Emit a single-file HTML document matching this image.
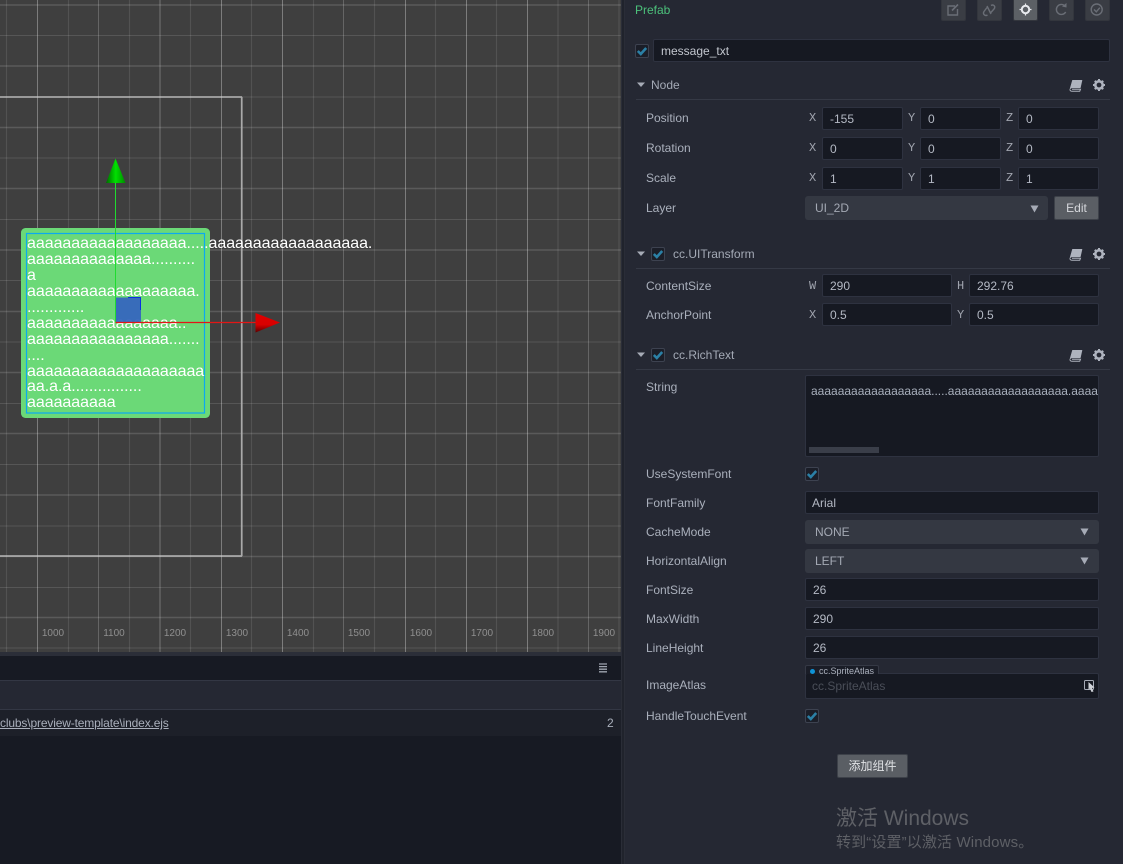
<!DOCTYPE html>
<html><head><meta charset="utf-8"><title>Inspector</title>
<style>
html,body{margin:0;padding:0;background:#252833}
body{width:1123px;height:864px;overflow:hidden;position:relative;font-family:"Liberation Sans","Noto Sans CJK SC",sans-serif;font-size:12px;color:#aab0bc}
div,span,svg{position:absolute;box-sizing:border-box}
.l{left:646px;line-height:14px;white-space:nowrap;color:#aab0bc}
.i{background:#161922;border:1px solid #2e3240;border-radius:2px;height:23px;line-height:22px;padding-left:7px;color:#b4b9c4;white-space:nowrap;overflow:hidden}
.s{background:#343842;border-radius:3px;height:24px;line-height:24px;padding-left:10px;left:805px;color:#a4a9b4}
.a{font-family:"Liberation Mono",monospace;font-size:12px;color:#a0a4ae;line-height:14px}
.c{width:14px;height:14px;background:#1b1e28;border:1px solid #3d4250;border-radius:2px}
.h{left:636px;width:474px;height:1px;background:#353945}
.t{line-height:14px;color:#a4aab6;white-space:nowrap}
.rl{font-size:10px;color:#8f8f8f;line-height:12px;top:628px;width:30px;text-align:center}
.m{left:27px;font-size:16px;line-height:16px;color:#fff;white-space:pre;letter-spacing:-.04px}
.b{top:0;width:25px;height:21px;background:#3a3d44;border-radius:0 0 2px 2px;border:1px solid #33363d;border-top:0}
</style></head><body>
<svg width="0" height="0" style="left:0;top:0">
<defs>
<symbol id="ck" viewBox="0 0 14 14"><path d="M2.800 7L5.800 10L11.200 4" fill="none" stroke="#2b80a6" stroke-width="2.600"/></symbol>
<symbol id="bk" viewBox="0 0 14 12"><path d="M3.500 .3H13L11.300 7.800H3C2 7.800 1.300 8.300 1 9.300L.8 9.800Z" fill="#aeb3be" stroke="#aeb3be" stroke-width=".6" stroke-linejoin="round"/><path d="M1 9.800C1.200 10.900 1.900 11.300 3 11.300H10.700L11.500 9.300H3" fill="none" stroke="#aeb3be" stroke-width="1"/></symbol>
<symbol id="gr" viewBox="0 0 12 12"><circle cx="6" cy="6" r="3.700" fill="none" stroke="#aeb3be" stroke-width="2.600"/><path d="M6 0V2.500M6 9.500V12M0 6H2.500M9.500 6H12M1.800 1.800L3.500 3.500M8.500 8.500L10.200 10.200M1.800 10.200L3.500 8.500M8.500 3.500L10.200 1.800" stroke="#aeb3be" stroke-width="2"/></symbol>
<symbol id="tr" viewBox="0 0 10 6"><path d="M1 .5H9L5 5Z" fill="#a6abb6"/></symbol>
<symbol id="dd" viewBox="0 0 9 8"><path d="M.5 .5H8.500L4.500 7.500Z" fill="#a6abb6"/></symbol>
</defs></svg>

<!-- scene -->
<div style="left:0;top:0;width:621px;height:652px;background:#3f3f3f;overflow:hidden">
<svg width="621" height="652" style="left:0;top:0">
<g stroke="#fff" stroke-opacity=".1" stroke-width="1.200">
<path d="M6.500 0V652M68.500 0V652M129.500 0V652M190.500 0V652M251.500 0V652M313.500 0V652M374.500 0V652M435.500 0V652M496.500 0V652M558 0V652M619 0V652"/>
</g>
<g stroke="#fff">
<path d="M0 5H621M0 66H621M0 127.500H621M0 188.500H621M0 250H621M0 311.500H621M0 372.500H621M0 433.500H621M0 495H621M0 556.500H621M0 617.500H621" stroke-opacity=".14" stroke-width="1.500"/>
<path d="M0 35.500H621M0 97H621M0 158H621M0 219.500H621M0 280.500H621M0 342H621M0 403.500H621M0 464.500H621M0 526H621M0 587.500H621M0 648H621" stroke-opacity=".12" stroke-width="1"/>
</g>
<g stroke="#fff" stroke-width="1">
<path d="M37.500 0V652M221.500 0V652M282.500 0V652M405.500 0V652M466.500 0V652M527.500 0V652" stroke-opacity=".32"/>
<path d="M98.500 0V652M343.500 0V652M588.500 0V652" stroke-opacity=".2"/>
<path d="M160 0V652" stroke-opacity=".18" stroke-width="1.600"/>
</g>
<path d="M0 97H241.500V556H0" fill="none" stroke="#cfcfcf" stroke-width="1.200"/>
<path d="M241.800 97V556" stroke="#aaa" stroke-width="1.600"/>
<rect x="21" y="228" width="189" height="190" rx="4.500" fill="#6bd977"/>
<rect x="26.500" y="233.500" width="178" height="179.500" fill="none" stroke="#0ba9f0" stroke-width="1.200"/>
</svg>
<div class="m" style="top:236px">aaaaaaaaaaaaaaaaaa.....aaaaaaaaaaaaaaaaaa.</div>
<div class="m" style="top:252px">aaaaaaaaaaaaaa..........</div>
<div class="m" style="top:268px">a</div>
<div class="m" style="top:284px">aaaaaaaaaaaaaaaaaaa.</div>
<div class="m" style="top:300px">.............</div>
<div class="m" style="top:316px">aaaaaaaaaaaaaaaaa..</div>
<div class="m" style="top:332px">aaaaaaaaaaaaaaaa.......</div>
<div class="m" style="top:348px">....</div>
<div class="m" style="top:364px">aaaaaaaaaaaaaaaaaaaa</div>
<div class="m" style="top:379px">aa.a.a................</div>
<div class="m" style="top:395px">aaaaaaaaaa</div>
<svg width="621" height="652" style="left:0;top:0">
<defs>
<linearGradient id="gg" x1="0" x2="1" y1="0" y2="0"><stop offset="0" stop-color="#006a00"/><stop offset=".5" stop-color="#00e000"/><stop offset="1" stop-color="#008a00"/></linearGradient>
<linearGradient id="rg" x1="0" x2="0" y1="0" y2="1"><stop offset="0" stop-color="#e00000"/><stop offset=".6" stop-color="#d80000"/><stop offset="1" stop-color="#5a0000"/></linearGradient>
</defs>
<rect x="116" y="297.500" width="25" height="25" fill="#3563bf" fill-opacity=".93"/>
<path d="M128 297.500H140.500V310" fill="none" stroke="#0a2fe0" stroke-width="1"/>
<path d="M115.500 182V322" stroke="#1fdc2f" stroke-width="1"/>
<path d="M115.500 322.500H256" stroke="#e21616" stroke-width="1.200"/>
<path d="M115.500 158.500L125.500 183H106Z" fill="url(#gg)"/>
<path d="M280 322.500L255.500 313V332.500Z" fill="url(#rg)"/>
</svg>
<div class="rl" style="left:38px">1000</div><div class="rl" style="left:99px">1100</div><div class="rl" style="left:160px">1200</div><div class="rl" style="left:222px">1300</div><div class="rl" style="left:283px">1400</div><div class="rl" style="left:344px">1500</div><div class="rl" style="left:406px">1600</div><div class="rl" style="left:467px">1700</div><div class="rl" style="left:528px">1800</div><div class="rl" style="left:589px">1900</div>
</div>

<!-- console -->
<div style="left:0;top:652px;width:621px;height:4px;background:#2b2e38"></div>
<div style="left:0;top:656px;width:621px;height:25px;background:#171a23;border-bottom:1px solid #333744"></div>
<div style="left:0;top:681px;width:621px;height:29px;background:#252833;border-bottom:1px solid #333744"></div>
<div style="left:0;top:710px;width:621px;height:26px;background:#1d2029"></div>
<div style="left:0;top:736px;width:621px;height:128px;background:#171a23"></div>
<svg width="9" height="10" style="left:599px;top:663px"><path d="M0 1H8M0 3.600H8M0 6.200H8M0 8.800H8" stroke="#a0a5b0" stroke-width="1.300"/></svg>
<div class="t" style="left:0;top:716px;width:180px;text-decoration:underline;color:#a9afbb;letter-spacing:-.15px">clubs\preview-template\index.ejs</div>
<div class="t" style="left:607px;top:716px;color:#a9afbb">2</div>

<!-- divider -->
<div style="left:621px;top:0;width:4px;height:864px;background:#20232c;border-left:1px solid #2a2d37;border-right:1px solid #2a2d37"></div>

<!-- inspector top -->
<div class="t" style="left:635px;top:3px;color:#4cc17b">Prefab</div>
<div class="b" style="left:941px"></div><div class="b" style="left:977px"></div><div class="b" style="left:1013px;background:#5c6065"></div><div class="b" style="left:1049px"></div><div class="b" style="left:1085px"></div>
<svg width="170" height="21" style="left:941px;top:0" fill="none" stroke="#6a6e76" stroke-width="1.400">
<path d="M14 6H7V15H16.500V9"/><path d="M11 10.500L17 4.500" stroke-width="1.600"/>
<path d="M46 7.500L43 11.500C41.500 14 44 16.500 46.500 15M49 13.500L53 9C55 6.500 52.500 4 50 5.500M46 6L50 14"/>
<g stroke="#e8eaee"><circle cx="84.500" cy="9.500" r="3.700" stroke-width="2"/><path d="M84.500 3.500V5.500M84.500 13.500V15.500M78.500 9.500H80.500M88.500 9.500H90.500" stroke-width="1.200"/></g>
<path d="M124 6A5 5 0 1 0 124.700 12"/><path d="M121 6.500L125.500 7.500L125.500 3Z" fill="#6a6e76" stroke="none"/>
<circle cx="155.700" cy="9.500" r="5.500"/><path d="M153 9.500L155.300 11.800L158.800 7.700"/>
</svg>
<div class="c" style="left:635px;top:44px"></div><svg width="14" height="14" style="left:635px;top:44px"><use href="#ck"/></svg>
<div class="i" style="left:653px;top:39px;width:457px;color:#c2c6ce">message_txt</div>

<!-- Node -->
<svg width="10" height="6" style="left:636px;top:82px"><use href="#tr"/></svg>
<div class="t" style="left:651px;top:78px">Node</div>
<svg width="14" height="12" style="left:1069px;top:80px"><use href="#bk"/></svg>
<svg width="12" height="12" style="left:1093px;top:79px"><use href="#gr"/></svg>
<div class="h" style="top:99px"></div>

<div class="l" style="top:111px">Position</div>
<span class="a" style="left:809px;top:111px">X</span><div class="i" style="left:822px;top:107px;width:81px">-155</div>
<span class="a" style="left:908px;top:111px">Y</span><div class="i" style="left:920px;top:107px;width:81px">0</div>
<span class="a" style="left:1006px;top:111px">Z</span><div class="i" style="left:1018px;top:107px;width:81px">0</div>

<div class="l" style="top:141px">Rotation</div>
<span class="a" style="left:809px;top:141px">X</span><div class="i" style="left:822px;top:137px;width:81px">0</div>
<span class="a" style="left:908px;top:141px">Y</span><div class="i" style="left:920px;top:137px;width:81px">0</div>
<span class="a" style="left:1006px;top:141px">Z</span><div class="i" style="left:1018px;top:137px;width:81px">0</div>

<div class="l" style="top:171px">Scale</div>
<span class="a" style="left:809px;top:171px">X</span><div class="i" style="left:822px;top:167px;width:81px">1</div>
<span class="a" style="left:908px;top:171px">Y</span><div class="i" style="left:920px;top:167px;width:81px">1</div>
<span class="a" style="left:1006px;top:171px">Z</span><div class="i" style="left:1018px;top:167px;width:81px">1</div>

<div class="l" style="top:201px">Layer</div>
<div class="s" style="top:196px;width:243px">UI_2D</div>
<svg width="9" height="8" style="left:1030px;top:205px"><use href="#dd"/></svg>
<div style="left:1054px;top:196px;width:45px;height:24px;background:#5a5e64;border:1px solid #3d4149;border-radius:2px;text-align:center;line-height:22px;color:#d5d7db">Edit</div>

<!-- UITransform -->
<svg width="10" height="6" style="left:636px;top:251px"><use href="#tr"/></svg>
<div class="c" style="left:651px;top:247px"></div><svg width="14" height="14" style="left:651px;top:247px"><use href="#ck"/></svg>
<div class="t" style="left:673px;top:247px">cc.UITransform</div>
<svg width="14" height="12" style="left:1069px;top:249px"><use href="#bk"/></svg>
<svg width="12" height="12" style="left:1093px;top:248px"><use href="#gr"/></svg>
<div class="h" style="top:268px"></div>

<div class="l" style="top:279px">ContentSize</div>
<span class="a" style="left:809px;top:279px">W</span><div class="i" style="left:822px;top:274px;width:130px">290</div>
<span class="a" style="left:957px;top:279px">H</span><div class="i" style="left:969px;top:274px;width:130px">292.76</div>
<div class="l" style="top:308px">AnchorPoint</div>
<span class="a" style="left:809px;top:308px">X</span><div class="i" style="left:822px;top:303px;width:130px">0.5</div>
<span class="a" style="left:957px;top:308px">Y</span><div class="i" style="left:969px;top:303px;width:130px">0.5</div>

<!-- RichText -->
<svg width="10" height="6" style="left:636px;top:352px"><use href="#tr"/></svg>
<div class="c" style="left:651px;top:348px"></div><svg width="14" height="14" style="left:651px;top:348px"><use href="#ck"/></svg>
<div class="t" style="left:673px;top:348px">cc.RichText</div>
<svg width="14" height="12" style="left:1069px;top:350px"><use href="#bk"/></svg>
<svg width="12" height="12" style="left:1093px;top:349px"><use href="#gr"/></svg>
<div class="h" style="top:369px"></div>

<div class="l" style="top:380px">String</div>
<div class="i" style="left:805px;top:375px;width:294px;height:82px;padding-left:5px;line-height:30px;color:#a9b0bd">aaaaaaaaaaaaaaaaaa.....aaaaaaaaaaaaaaaaaa.aaaaaaaaaaaaaa</div>
<div style="left:809px;top:447px;width:70px;height:6px;background:#3a3e49"></div>

<div class="l" style="top:467px">UseSystemFont</div>
<div class="c" style="left:805px;top:467px"></div><svg width="14" height="14" style="left:805px;top:467px"><use href="#ck"/></svg>

<div class="l" style="top:496px">FontFamily</div>
<div class="i" style="left:805px;top:491px;width:294px;padding-left:6px">Arial</div>
<div class="l" style="top:525px">CacheMode</div>
<div class="s" style="top:520px;width:294px">NONE</div>
<svg width="9" height="8" style="left:1080px;top:528px"><use href="#dd"/></svg>
<div class="l" style="top:554px">HorizontalAlign</div>
<div class="s" style="top:549px;width:294px">LEFT</div>
<svg width="9" height="8" style="left:1080px;top:557px"><use href="#dd"/></svg>
<div class="l" style="top:583px">FontSize</div>
<div class="i" style="left:805px;top:578px;width:294px">26</div>
<div class="l" style="top:612px">MaxWidth</div>
<div class="i" style="left:805px;top:607px;width:294px">290</div>
<div class="l" style="top:641px">LineHeight</div>
<div class="i" style="left:805px;top:636px;width:294px">26</div>
<div class="l" style="top:678px">ImageAtlas</div>
<div class="i" style="left:805px;top:673px;width:294px;height:26px;line-height:24px;padding-left:6px;color:#4a4e58">cc.SpriteAtlas</div>
<div style="left:805px;top:665px;width:74px;height:9px;background:#1a1d27;border:1px solid #353945;border-bottom:0;border-radius:2px 2px 0 0"></div>
<div style="left:810px;top:669px;width:5px;height:5px;border-radius:50%;background:#0f93d6"></div>
<div style="left:819px;top:665px;font-size:9px;line-height:12px;color:#aab0bc;white-space:nowrap">cc.SpriteAtlas</div>
<svg width="12" height="12" style="left:1084px;top:680px"><rect x=".5" y=".5" width="9" height="9" rx="1" fill="none" stroke="#a6abb6"/><path d="M4.500 2L10.500 7.500L8 8L9.500 11.500L7.500 12L6 8.500L4.500 10Z" fill="#cfd2d8"/></svg>
<div class="l" style="top:709px">HandleTouchEvent</div>
<div class="c" style="left:805px;top:709px"></div><svg width="14" height="14" style="left:805px;top:709px"><use href="#ck"/></svg>

<div style="left:837px;top:754px;width:71px;height:24px;background:#5a5e64;border:1px solid #3d4149;border-radius:2px;text-align:center;line-height:22px;color:#dfe1e4">添加组件</div>

<div style="left:836px;top:805px;font-size:21px;line-height:27px;color:#5e6066;white-space:nowrap">激活 Windows</div>
<div style="left:836px;top:832px;font-size:15px;line-height:21px;color:#5e6066;white-space:nowrap;letter-spacing:.13px">转到“设置”以激活 Windows。</div>
</body></html>
